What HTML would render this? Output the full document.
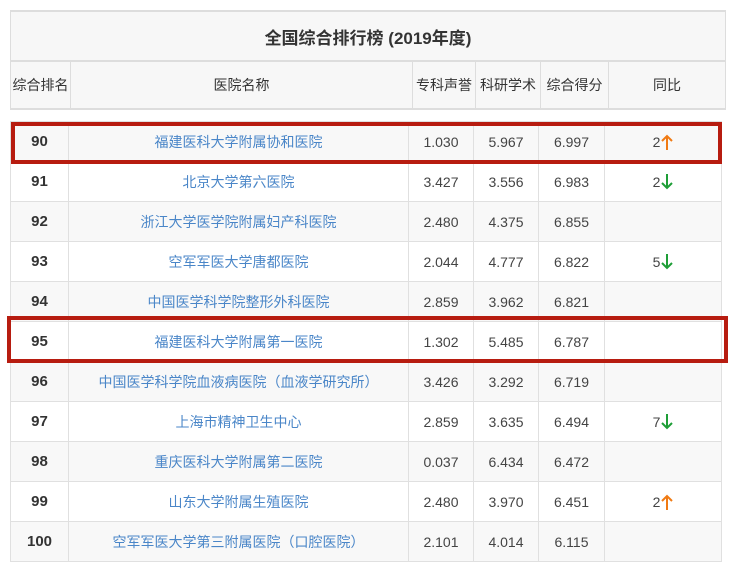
<!DOCTYPE html>
<html><head><meta charset="utf-8"><style>
body{margin:0;width:736px;height:574px;background:#fff;position:relative;overflow:hidden;font-family:"Liberation Sans","Noto Sans CJK SC",sans-serif;font-size:14px;color:#444}
table{border-collapse:collapse;position:absolute;table-layout:fixed}
td{border:1px solid #e0e0e0;text-align:center;padding:0;white-space:nowrap}
.h td{color:#333;background:#f7f7f7;border-color:#ddd;border-width:2px 1px}
.d td{height:39px}
.d tr:nth-child(odd) td{background:#f8f8f8}
.r{font-weight:bold;color:#333;font-size:15px}
.n{color:#4a86c8}
svg{vertical-align:-3px;margin-left:1px}
.box{position:absolute;border:4px solid #b71c10;box-sizing:border-box}
</style></head><body>
<table class="h" style="left:10px;top:10px;width:716px">
<colgroup><col style="width:60px"><col style="width:342px"><col style="width:63px"><col style="width:65px"><col style="width:68px"><col></colgroup>
<tr><td colspan="6" style="height:48px;font-size:17px;font-weight:bold">全国综合排行榜 (2019年度)</td></tr>
<tr style="height:48px"><td>综合排名</td><td>医院名称</td><td>专科声誉</td><td>科研学术</td><td>综合得分</td><td>同比</td></tr>
</table>
<table class="d" style="left:10px;top:121px;width:712px">
<colgroup><col style="width:58px"><col style="width:340px"><col style="width:65px"><col style="width:65px"><col style="width:66px"><col></colgroup>
<tr><td class="r">90</td><td class="n">福建医科大学附属协和医院</td><td>1.030</td><td>5.967</td><td>6.997</td><td>2<svg width="12" height="16" viewBox="0 0 12 16"><path d="M6 16V2M1 7L6 2L11 7" stroke="#f07a13" stroke-width="2" fill="none"/></svg></td></tr>
<tr><td class="r">91</td><td class="n">北京大学第六医院</td><td>3.427</td><td>3.556</td><td>6.983</td><td>2<svg width="12" height="16" viewBox="0 0 12 16"><path d="M6 0V14M1 9L6 14L11 9" stroke="#1e9e37" stroke-width="2" fill="none"/></svg></td></tr>
<tr><td class="r">92</td><td class="n">浙江大学医学院附属妇产科医院</td><td>2.480</td><td>4.375</td><td>6.855</td><td></td></tr>
<tr><td class="r">93</td><td class="n">空军军医大学唐都医院</td><td>2.044</td><td>4.777</td><td>6.822</td><td>5<svg width="12" height="16" viewBox="0 0 12 16"><path d="M6 0V14M1 9L6 14L11 9" stroke="#1e9e37" stroke-width="2" fill="none"/></svg></td></tr>
<tr><td class="r">94</td><td class="n">中国医学科学院整形外科医院</td><td>2.859</td><td>3.962</td><td>6.821</td><td></td></tr>
<tr><td class="r">95</td><td class="n">福建医科大学附属第一医院</td><td>1.302</td><td>5.485</td><td>6.787</td><td></td></tr>
<tr><td class="r">96</td><td class="n">中国医学科学院血液病医院（血液学研究所）</td><td>3.426</td><td>3.292</td><td>6.719</td><td></td></tr>
<tr><td class="r">97</td><td class="n">上海市精神卫生中心</td><td>2.859</td><td>3.635</td><td>6.494</td><td>7<svg width="12" height="16" viewBox="0 0 12 16"><path d="M6 0V14M1 9L6 14L11 9" stroke="#1e9e37" stroke-width="2" fill="none"/></svg></td></tr>
<tr><td class="r">98</td><td class="n">重庆医科大学附属第二医院</td><td>0.037</td><td>6.434</td><td>6.472</td><td></td></tr>
<tr><td class="r">99</td><td class="n">山东大学附属生殖医院</td><td>2.480</td><td>3.970</td><td>6.451</td><td>2<svg width="12" height="16" viewBox="0 0 12 16"><path d="M6 16V2M1 7L6 2L11 7" stroke="#f07a13" stroke-width="2" fill="none"/></svg></td></tr>
<tr><td class="r">100</td><td class="n">空军军医大学第三附属医院（口腔医院）</td><td>2.101</td><td>4.014</td><td>6.115</td><td></td></tr>
</table>
<div class="box" style="left:11px;top:122px;width:711px;height:42px"></div>
<div class="box" style="left:7px;top:316px;width:721px;height:47px"></div>
</body></html>
